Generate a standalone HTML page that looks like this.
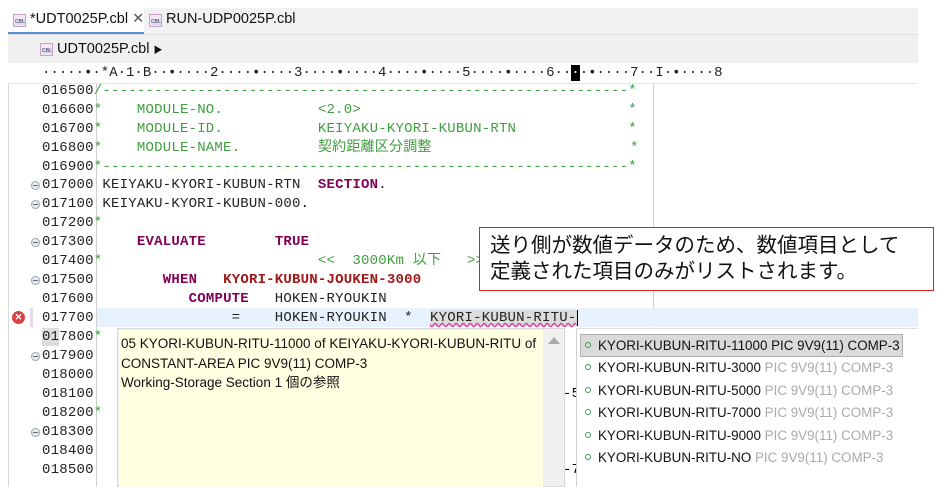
<!DOCTYPE html>
<html><head><meta charset="utf-8"><style>
*{margin:0;padding:0;box-sizing:border-box}
body{width:937px;height:487px;background:#fff;position:relative;overflow:hidden;font-family:"Liberation Sans","Noto Sans CJK JP",sans-serif}
.abs{position:absolute}
.mono{font-family:"Liberation Mono","Noto Sans CJK JP",monospace;font-size:14px;white-space:pre;letter-spacing:0.22px}
.ln{position:absolute;left:42px;height:19px;line-height:19px;color:#222}
.g{color:#3f9f3f}
.kw{color:#7f0055;font-weight:bold}
.rd{color:#a01818;font-weight:bold}
.fold{position:absolute;left:31px;width:9px;height:9px;border-radius:50%;border:1px solid #9aa;background:#e8ecf0}
.fold:after{content:"";position:absolute;left:1px;top:3px;width:5px;height:1px;background:#667}
.item{position:absolute;left:585px;font-size:13.4px;color:#111;white-space:nowrap;height:22px;line-height:22px}
.item b{font-weight:normal;color:#aaa}
.dot{display:inline-block;width:6px;height:6px;border:1.5px solid #3a9a5a;border-radius:50%;margin-right:7px;vertical-align:2px}
.icon{position:absolute;width:13px;height:13px;background:#f4e8f4;border:1px solid #c9a0c9}
.icon:after{content:"CBL";position:absolute;left:1px;top:4px;font-size:5px;color:#336;background:#dde;line-height:6px}
</style></head><body>
<div class="abs" style="left:8px;top:8px;width:910px;height:27px;background:#f2f2f2;border-bottom:1px solid #e0e0e0"></div>
<div class="abs" style="left:8px;top:8px;width:136px;height:26px;background:#fff"></div>
<div class="abs" style="left:8px;top:32px;width:136px;height:2px;background:#5b8fd6"></div>
<div class="icon" style="left:13px;top:14px"></div>
<div class="abs" style="left:30px;top:11px;font-size:14.5px;color:#111">*UDT0025P.cbl <span style="color:#555">&#x2715;</span></div>
<div class="icon" style="left:149px;top:14px"></div>
<div class="abs" style="left:166px;top:11px;font-size:14.5px;color:#111">RUN-UDP0025P.cbl</div>
<div class="abs" style="left:8px;top:35px;width:910px;height:28px;background:#f0f0f0"></div>
<div class="icon" style="left:40px;top:43px"></div>
<div class="abs" style="left:57px;top:41px;font-size:14.5px;color:#111">UDT0025P.cbl <span style="font-size:9px">&#9654;</span></div>
<div class="abs mono" style="left:42px;top:64px;height:19px;line-height:19px;color:#222;letter-spacing:0px">·····•·*A·1·B··•····2····•····3····•····4····•····5····•····6··<span style="background:#000;color:#fff">·</span>·•····7··I·•····8</div>
<div class="abs" style="left:8px;top:83px;width:910px;height:1px;background:#e6e6e6"></div>
<div class="abs" style="left:8px;top:84px;width:1px;height:403px;background:#d8d8d8"></div>
<div class="abs" style="left:96px;top:84px;width:1px;height:403px;background:#d0d0d0"></div>
<div class="abs" style="left:653px;top:84px;width:1px;height:244px;background:#d0d0d0"></div>
<div class="abs" style="left:97px;top:308px;width:821px;height:19px;background:#e8f2fe"></div>
<div class="abs" style="left:30px;top:308px;width:3px;height:19px;background:#ecd8ec"></div>
<div class="abs" style="left:12px;top:311px;width:13px;height:13px;border-radius:50%;background:#d84444;color:#fff;font-size:9px;line-height:13px;text-align:center;font-weight:bold">✕</div>
<div class="abs" style="left:42px;top:328px;width:17px;height:18px;background:#ddd"></div>

<div class="ln mono" style="top:82px">016500<span class="g">/-------------------------------------------------------------*</span></div>
<div class="ln mono" style="top:101px">016600<span class="g">*    MODULE-NO.           &lt;2.0&gt;                               *</span></div>
<div class="ln mono" style="top:120px">016700<span class="g">*    MODULE-ID.           KEIYAKU-KYORI-KUBUN-RTN             *</span></div>
<div class="ln mono" style="top:139px">016800<span class="g">*    MODULE-NAME.         契約距離区分調整                       *</span></div>
<div class="ln mono" style="top:158px">016900<span class="g">*-------------------------------------------------------------*</span></div>
<div class="fold" style="top:181px"></div>
<div class="ln mono" style="top:176px">017000 KEIYAKU-KYORI-KUBUN-RTN  <span class="kw">SECTION</span>.</div>
<div class="fold" style="top:200px"></div>
<div class="ln mono" style="top:195px">017100 KEIYAKU-KYORI-KUBUN-000.</div>
<div class="ln mono" style="top:214px">017200<span class="g">*</span></div>
<div class="fold" style="top:238px"></div>
<div class="ln mono" style="top:233px">017300     <span class="kw">EVALUATE</span>        <span class="kw">TRUE</span></div>
<div class="ln mono" style="top:252px">017400<span class="g">*                         &lt;&lt;  3000Km 以下   &gt;&gt;</span></div>
<div class="fold" style="top:276px"></div>
<div class="ln mono" style="top:271px">017500        <span class="kw">WHEN</span>   <span class="rd">KYORI-KUBUN-JOUKEN-3000</span></div>
<div class="ln mono" style="top:290px">017600           <span class="kw">COMPUTE</span>   HOKEN-RYOUKIN</div>
<div class="ln mono" style="top:309px">017700                =    HOKEN-RYOUKIN  *  <span style="background:#dcdcdc;text-decoration:underline wavy #e040a0">KYORI-KUBUN-RITU-</span><span style="border-left:1px solid #000"></span></div>
<div class="ln mono" style="top:328px">017800<span class="g">*</span></div>
<div class="fold" style="top:352px"></div>
<div class="ln mono" style="top:347px">017900</div>
<div class="ln mono" style="top:366px">018000</div>
<div class="ln mono" style="top:385px">018100</div>
<div class="ln mono" style="top:404px">018200<span class="g">*</span></div>
<div class="fold" style="top:428px"></div>
<div class="ln mono" style="top:423px">018300</div>
<div class="ln mono" style="top:442px">018400</div>
<div class="ln mono" style="top:461px">018500</div>
<div class="abs mono" style="left:563px;top:385px;line-height:19px">-5</div>
<div class="abs mono" style="left:563px;top:461px;line-height:19px">-7</div>

<div class="abs" style="left:117px;top:328px;width:448px;height:159px;background:#f0f0f0;border:1px solid #d8d8d8"></div>
<div class="abs" style="left:119px;top:330px;width:424px;height:157px;background:#ffffe1"></div>
<div class="abs" style="left:548px;top:337px;width:0;height:0;border-left:6px solid transparent;border-right:6px solid transparent;border-bottom:7px solid #aaa"></div>
<div class="abs" style="left:121px;top:334px;font-size:13.5px;line-height:19.5px;color:#111">05 KYORI-KUBUN-RITU-11000 of KEIYAKU-KYORI-KUBUN-RITU of<br>CONSTANT-AREA PIC 9V9(11) COMP-3<br>Working-Storage Section 1 個の参照</div>

<div class="abs" style="left:576px;top:328px;width:342px;height:159px;background:#fff;border-left:1px solid #d0d0d0;border-top:1px solid #e0e0e0"></div>
<div class="abs" style="left:580px;top:334px;width:323px;height:23px;background:#dadada;border:1px solid #b0b0b0"></div>
<div class="item" style="top:335px"><span class="dot"></span>KYORI-KUBUN-RITU-11000 PIC 9V9(11) COMP-3</div>
<div class="item" style="top:357px"><span class="dot"></span>KYORI-KUBUN-RITU-3000 <b>PIC 9V9(11) COMP-3</b></div>
<div class="item" style="top:380px"><span class="dot"></span>KYORI-KUBUN-RITU-5000 <b>PIC 9V9(11) COMP-3</b></div>
<div class="item" style="top:402px"><span class="dot"></span>KYORI-KUBUN-RITU-7000 <b>PIC 9V9(11) COMP-3</b></div>
<div class="item" style="top:425px"><span class="dot"></span>KYORI-KUBUN-RITU-9000 <b>PIC 9V9(11) COMP-3</b></div>
<div class="item" style="top:447px"><span class="dot"></span>KYORI-KUBUN-RITU-NO <b>PIC 9V9(11) COMP-3</b></div>

<div class="abs" style="left:479px;top:227px;width:455px;height:64px;background:#fff;border:1.5px solid #e02020;padding:2px 0 0 10px;font-size:20.5px;line-height:26px;color:#111;font-family:'Noto Sans CJK JP',sans-serif;white-space:nowrap">送り側が数値データのため、数値項目として<br>定義された項目のみがリストされます。</div>
</body></html>
